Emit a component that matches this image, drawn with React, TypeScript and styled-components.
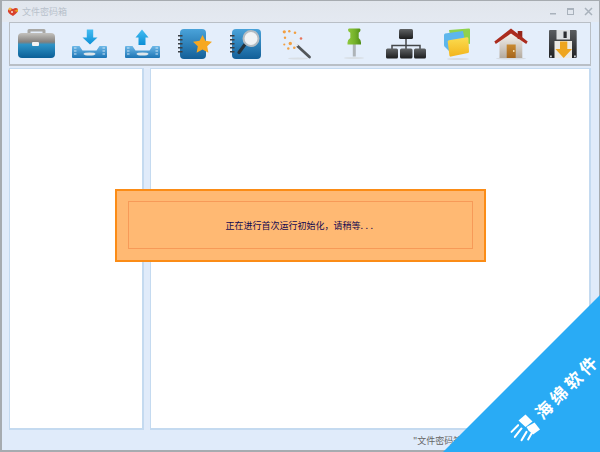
import styled, { createGlobalStyle } from "styled-components";

const GlobalStyle = createGlobalStyle`
  html, body {
    margin: 0;
    padding: 0;
    background: #fff;
  }
  #root {
    width: 600px;
    height: 452px;
  }
`;

function BriefcaseIcon() {
  return (
    <svg width="44" height="36" viewBox="0 0 44 36">
      <defs>
        <linearGradient id="caseBody" x1="0" y1="0" x2="0" y2="1">
          <stop offset="0" stopColor="#c4c2be" />
          <stop offset="0.36" stopColor="#83807d" />
          <stop offset="0.46" stopColor="#2f93c6" />
          <stop offset="1" stopColor="#0b5f97" />
        </linearGradient>
      </defs>
      <path d="M11 8V4.5Q11 3 12.5 3h15Q29 3 29 4.5V8h-3V5.5H14V8z" fill="#a9a8a5" transform="translate(2.5 0)" />
      <rect x="4" y="7" width="37" height="25" rx="4" fill="url(#caseBody)" />
      <rect x="18" y="16" width="7" height="4" rx="1" fill="#f2f2f2" />
    </svg>
  );
}

function TrayIcon({ up }: { up?: boolean }) {
  return (
    <svg width="44" height="36" viewBox="0 0 44 36">
      <defs>
        <linearGradient id="trayArrow" x1="0" y1="0" x2="0" y2="1">
          <stop offset="0" stopColor="#45bdf2" />
          <stop offset="1" stopColor="#0b8fd6" />
        </linearGradient>
        <linearGradient id="trayBody" x1="0" y1="0" x2="0" y2="1">
          <stop offset="0" stopColor="#6db8e8" />
          <stop offset="1" stopColor="#1c74b4" />
        </linearGradient>
      </defs>
      {up ? (
        <path d="M22 3.500l6.500 8h-3v7.500h-7v-7.500h-3z" fill="url(#trayArrow)" />
      ) : (
        <path d="M19.800 3.500h6.400v8h4.300L23 18.500l-7.500-7h4.300z" fill="url(#trayArrow)" />
      )}
      <path
        d="M6 20h6.500l3 4.500h14l3-4.500H39q1 0 1 1v10q0 1-1 1H6q-1 0-1-1V21q0-1 1-1z"
        fill="url(#trayBody)"
      />
      <path d="M7 22h2.500M7 25h2.500M7 28h2.500" stroke="#cfe6f6" strokeWidth="1.200" />
      <path d="M35.500 22h2.500M35.500 25h2.500M35.500 28h2.500" stroke="#cfe6f6" strokeWidth="1.200" />
      <ellipse cx="22.500" cy="28" rx="6" ry="1.600" fill="#dfe6ea" />
    </svg>
  );
}

function NotebookBase({ width }: { width: number }) {
  return (
    <>
      <defs>
        <linearGradient id="bookBody" x1="0" y1="0" x2="0" y2="1">
          <stop offset="0" stopColor="#4aa3da" />
          <stop offset="1" stopColor="#125f98" />
        </linearGradient>
      </defs>
      <rect x="7" y="3" width={width} height="30" rx="4" fill="url(#bookBody)" />
      {[9, 13, 17, 21, 25].map((y) => (
        <rect key={y} x="5" y={y} width="4.500" height="1.500" fill="#3a3f44" />
      ))}
    </>
  );
}

function StarBookIcon() {
  return (
    <svg width="44" height="36" viewBox="0 0 44 36">
      <NotebookBase width={26} />
      <path
        d="M29.500 9l2.900 5.800 6.600 1-4.800 4.500 1.200 6.400-5.900-3.100-5.900 3.100 1.200-6.400-4.800-4.500 6.600-1z"
        fill="#f6a821"
      />
    </svg>
  );
}

function SearchBookIcon() {
  return (
    <svg width="44" height="36" viewBox="0 0 44 36">
      <NotebookBase width={29} />
      <path d="M19.500 19l-5.500 7.500" stroke="#26333c" strokeWidth="3.200" strokeLinecap="round" />
      <circle cx="26" cy="12.500" r="7.500" fill="#f0f3f5" stroke="#b4bcc2" strokeWidth="2" />
    </svg>
  );
}

function WandIcon() {
  const sparks = [
    [6.3, 5.8, 1.6],
    [11.3, 5.2, 1.2],
    [17, 6.8, 1.3],
    [7, 11.8, 1.2],
    [6.3, 18.5, 1.1],
    [12.3, 17.5, 1.7],
    [16.3, 21.8, 1.3],
    [10.3, 22.5, 1.2],
  ];
  return (
    <svg width="44" height="36" viewBox="0 0 44 36">
      <ellipse cx="20" cy="32.500" rx="10" ry="1" fill="#d9dfe5" />
      <path d="M19.500 20l12 11" stroke="#53575a" strokeWidth="2.800" strokeLinecap="round" />
      <path d="M13 13.500l6.500 6.500" stroke="#e9ebee" strokeWidth="2.400" />
      {sparks.map(([x, y, r]) => (
        <circle key={`${x}-${y}`} cx={x} cy={y} r={r} fill="#f2a043" />
      ))}
      <circle cx="23" cy="12.500" r="1.300" fill="#e8735c" />
    </svg>
  );
}

function PinIcon() {
  return (
    <svg width="44" height="36" viewBox="0 0 44 36">
      <defs>
        <linearGradient id="pinHead" x1="0" y1="0" x2="1" y2="0">
          <stop offset="0" stopColor="#8ec83c" />
          <stop offset="0.55" stopColor="#74b12a" />
          <stop offset="1" stopColor="#4f8d16" />
        </linearGradient>
      </defs>
      <ellipse cx="23" cy="32" rx="10" ry="1" fill="#d9dfe5" />
      <rect x="21.800" y="18" width="3" height="12.500" fill="#aeb4b8" />
      <path
        d="M18 2.500h10.500q1 0 1 1.500t-1.800 2.800v5.200q2.300 1.500 2.300 4.500v2H16.500v-2q0-3 2.800-4.500V6.800Q17 5.500 17 4t1-1.500z"
        fill="url(#pinHead)"
      />
    </svg>
  );
}

function OrgChartIcon() {
  return (
    <svg width="44" height="36" viewBox="0 0 44 36">
      <defs>
        <linearGradient id="orgBox" x1="0" y1="0" x2="0" y2="1">
          <stop offset="0" stopColor="#606365" />
          <stop offset="1" stopColor="#1c1d1e" />
        </linearGradient>
      </defs>
      <path d="M23 13v10M9 23v-3.500h28V23" fill="none" stroke="#44474a" strokeWidth="1.500" />
      <rect x="16" y="3" width="14" height="10" rx="1.500" fill="url(#orgBox)" />
      <rect x="3" y="22.500" width="12" height="10" rx="1.500" fill="url(#orgBox)" />
      <rect x="17" y="22.500" width="12.500" height="10" rx="1.500" fill="url(#orgBox)" />
      <rect x="31" y="22.500" width="12" height="10" rx="1.500" fill="url(#orgBox)" />
    </svg>
  );
}

function FoldersIcon() {
  return (
    <svg width="44" height="36" viewBox="0 0 44 36">
      <defs>
        <linearGradient id="frontFolder" x1="0" y1="0" x2="0" y2="1">
          <stop offset="0" stopColor="#fbdc50" />
          <stop offset="1" stopColor="#f3b51c" />
        </linearGradient>
      </defs>
      <ellipse cx="22" cy="33" rx="11" ry="1" fill="#d5dbe2" />
      <path d="M13 4l20-1.500q1 0 1 1V18L15 14z" fill="#8fd24c" strokeLinejoin="round" />
      <path d="M9 7.500L27 5l2 10-16 10-4-4q-1-.500-1-2V9q0-1 1-1.500z" fill="#5db6ec" />
      <path
        d="M13 14.300l18-3q1.300 0 1.400 1.200l.6 13.300q0 1-1 1.200l-17 3.600q-1.400.200-1.600-1l-1.700-14q0-1.100 1.300-1.300z"
        fill="url(#frontFolder)"
      />
    </svg>
  );
}

function HouseIcon() {
  return (
    <svg width="44" height="36" viewBox="0 0 44 36">
      <defs>
        <linearGradient id="houseWall" x1="0" y1="0" x2="0" y2="1">
          <stop offset="0" stopColor="#fbfaf8" />
          <stop offset="1" stopColor="#b4aa9e" />
        </linearGradient>
        <linearGradient id="houseDoor" x1="0" y1="0" x2="0" y2="1">
          <stop offset="0" stopColor="#c98a30" />
          <stop offset="1" stopColor="#a5651c" />
        </linearGradient>
      </defs>
      <ellipse cx="22" cy="32.500" rx="15" ry="1" fill="#d5dbe2" />
      <path d="M10.500 14L22 5l11.300 9v18H10.500z" fill="url(#houseWall)" />
      <rect x="28.700" y="5" width="4.600" height="8" fill="#96261a" />
      <path d="M5.300 15.500L22 2.500l16.700 13-1.500 2.500L22 7.500 6.800 18z" fill="#ab2c1e" />
      <rect x="17.700" y="18.500" width="9" height="13.500" fill="url(#houseDoor)" />
      <rect x="24" y="24" width="1.500" height="2" fill="#f0d9a8" />
    </svg>
  );
}

function FloppyIcon() {
  return (
    <svg width="44" height="36" viewBox="0 0 44 36">
      <defs>
        <linearGradient id="floppyBody" x1="0" y1="0" x2="0" y2="1">
          <stop offset="0" stopColor="#5a5d60" />
          <stop offset="1" stopColor="#1f2022" />
        </linearGradient>
      </defs>
      <rect x="7" y="4" width="27.700" height="28" rx="1" fill="url(#floppyBody)" />
      <rect x="14.500" y="4" width="13.500" height="9.500" fill="#dde0e2" />
      <rect x="21.500" y="5.500" width="3.200" height="6.500" fill="#2b2d30" />
      <rect x="12.500" y="15" width="17.500" height="17" fill="#eceae4" />
      <path d="M18 15.500h7.300v7.500h4.700L21.700 32l-8.300-9H18z" fill="#eea51f" />
      <rect x="8" y="29.500" width="1.800" height="1.800" fill="#cfd2d4" />
      <rect x="32" y="29.500" width="1.800" height="1.800" fill="#cfd2d4" />
    </svg>
  );
}

const tools = [
  <BriefcaseIcon />,
  <TrayIcon />,
  <TrayIcon up />,
  <StarBookIcon />,
  <SearchBookIcon />,
  <WandIcon />,
  <PinIcon />,
  <OrgChartIcon />,
  <FoldersIcon />,
  <HouseIcon />,
  <FloppyIcon />,
];

function App() {
  return (
    <>
      <GlobalStyle />
      <Window>
        <TitleBar>
          <TitleLeft>
            <svg width="12" height="10" viewBox="0 0 12 10">
              <path d="M1 3q2-3 5-1 3-2 5 0 1 3-5 7Q0 6 1 3z" fill="#d8402c" />
              <path d="M7 4l4-2v3z" fill="#e8a020" />
              <circle cx="3" cy="2" r="1.500" fill="#f2b441" />
              <circle cx="5" cy="5" r="1" fill="#f6e6d8" />
            </svg>
            <TitleText>文件密码箱</TitleText>
          </TitleLeft>
          <WindowControls>
            <svg width="9" height="9" viewBox="0 0 9 9">
              <rect x="2" y="6" width="6" height="1.500" fill="#a9b2bc" />
            </svg>
            <svg width="9" height="9" viewBox="0 0 9 9">
              <rect x="1.500" y="1.500" width="6" height="6" fill="none" stroke="#a9b2bc" />
              <rect x="1" y="1" width="7" height="2" fill="#a9b2bc" />
            </svg>
            <svg width="9" height="9" viewBox="0 0 9 9">
              <path d="M1 1l7 7M8 1L1 8" stroke="#a9b2bc" strokeWidth="1.500" />
            </svg>
          </WindowControls>
        </TitleBar>
        <Toolbar>
          {tools.map((icon, i) => (
            <ToolCell key={i}>{icon}</ToolCell>
          ))}
        </Toolbar>
        <Panels>
          <SidePanel />
          <MainPanel />
        </Panels>
        <StatusBar>"文件密码箱" 正在运行</StatusBar>
      </Window>
      <Dialog>
        <DialogInner>
          <DialogText>
            {"正在进行首次运行初始化\uFF0C请稍等"}
            <Dots>...</Dots>
          </DialogText>
        </DialogInner>
      </Dialog>
      <Ribbon>
        <RibbonLabel>
          <LogoMark width="28" height="28" viewBox="0 0 28 28">
            <g transform="rotate(45 14 14)" fill="#fff">
              <path d="M7 7l7-6 7 7-7 5.500z" />
              <path d="M15 13.500L23 9l5.500 7-7 5-4.500-4z" />
              <path
                d="M6.600 11.700L0 18.400M10 15L3.300 23.400M15 18.400L10 26.700M20 20l-3.400 6"
                stroke="#fff"
                strokeWidth="2"
                strokeLinecap="round"
              />
            </g>
          </LogoMark>
          <RibbonText>海绵软件</RibbonText>
        </RibbonLabel>
      </Ribbon>
    </>
  );
}

const Window = styled.div`
  box-sizing: border-box;
  width: 600px;
  height: 452px;
  display: flex;
  flex-direction: column;
  background: #e0ebfa;
  border: 1px solid #a6abb0;
  border-width: 1px 1px 2px 2px;
  font-family: "Noto Sans CJK SC", "Liberation Sans", sans-serif;
`;

const TitleBar = styled.div`
  height: 21px;
  display: flex;
  align-items: center;
  justify-content: space-between;
  padding: 0 6px 0 5px;
  background: linear-gradient(#e1e6ed, #e4e9f1);
`;

const TitleLeft = styled.div`
  display: flex;
  align-items: center;
  gap: 3px;
`;

const TitleText = styled.span`
  font-size: 9px;
  color: #b8c1cb;
`;

const WindowControls = styled.div`
  display: flex;
  align-items: center;
  gap: 9px;
`;

const Toolbar = styled.div`
  box-sizing: border-box;
  height: 44px;
  margin: 0 8px 0 7px;
  display: grid;
  grid-template-columns: repeat(11, 1fr);
  background: #e4eefb;
  border: 1px solid #b9bfc6;
  border-width: 1px 1px 2px 1px;
`;

const ToolCell = styled.div`
  display: flex;
  align-items: center;
  justify-content: center;
`;

const Panels = styled.div`
  flex: 1;
  display: flex;
  gap: 6px;
  margin: 2px 8px 0 7px;
  min-height: 0;
`;

const SidePanel = styled.div`
  box-sizing: border-box;
  width: 135px;
  background: #fff;
  border: 1px solid #c4daf0;
  border-width: 1px 2px 2px 1px;
`;

const MainPanel = styled(SidePanel)`
  flex: 1;
  width: auto;
`;

const StatusBar = styled.div`
  height: 20px;
  display: flex;
  align-items: center;
  padding-left: 411px;
  font-size: 9px;
  color: #666;
`;

const Dialog = styled.div`
  position: absolute;
  left: 115px;
  top: 189px;
  box-sizing: border-box;
  width: 371px;
  height: 73px;
  padding: 10px 11px 11px 11px;
  background: #ffb973;
  border: 2px solid #fb8c16;
  font-family: "Noto Sans CJK SC", "Liberation Sans", sans-serif;
`;

const DialogInner = styled.div`
  box-sizing: border-box;
  height: 100%;
  display: flex;
  align-items: center;
  justify-content: center;
  border: 1px solid #f79a58;
`;

const DialogText = styled.span`
  font-size: 9px;
  color: #100850;
  white-space: nowrap;
`;

const Dots = styled.span`
  letter-spacing: 2.5px;
`;

const Ribbon = styled.div`
  position: absolute;
  right: 0;
  bottom: 0;
  width: 157px;
  height: 157px;
  background: #29abf5;
  clip-path: polygon(100% 0, 100% 100%, 0 100%);
  font-family: "Noto Sans CJK SC", "Liberation Sans", sans-serif;
`;

const RibbonLabel = styled.div`
  position: absolute;
  left: 113px;
  top: 102px;
  width: max-content;
  display: flex;
  align-items: center;
  gap: 3px;
  transform: translate(-50%, -50%) rotate(-45deg);
`;

const LogoMark = styled.svg`
  flex: none;
  overflow: visible;
`;

const RibbonText = styled.span`
  font-size: 17px;
  font-weight: 700;
  letter-spacing: 3.8px;
  line-height: 18px;
  color: #fff;
  white-space: nowrap;
`;

export default App;
